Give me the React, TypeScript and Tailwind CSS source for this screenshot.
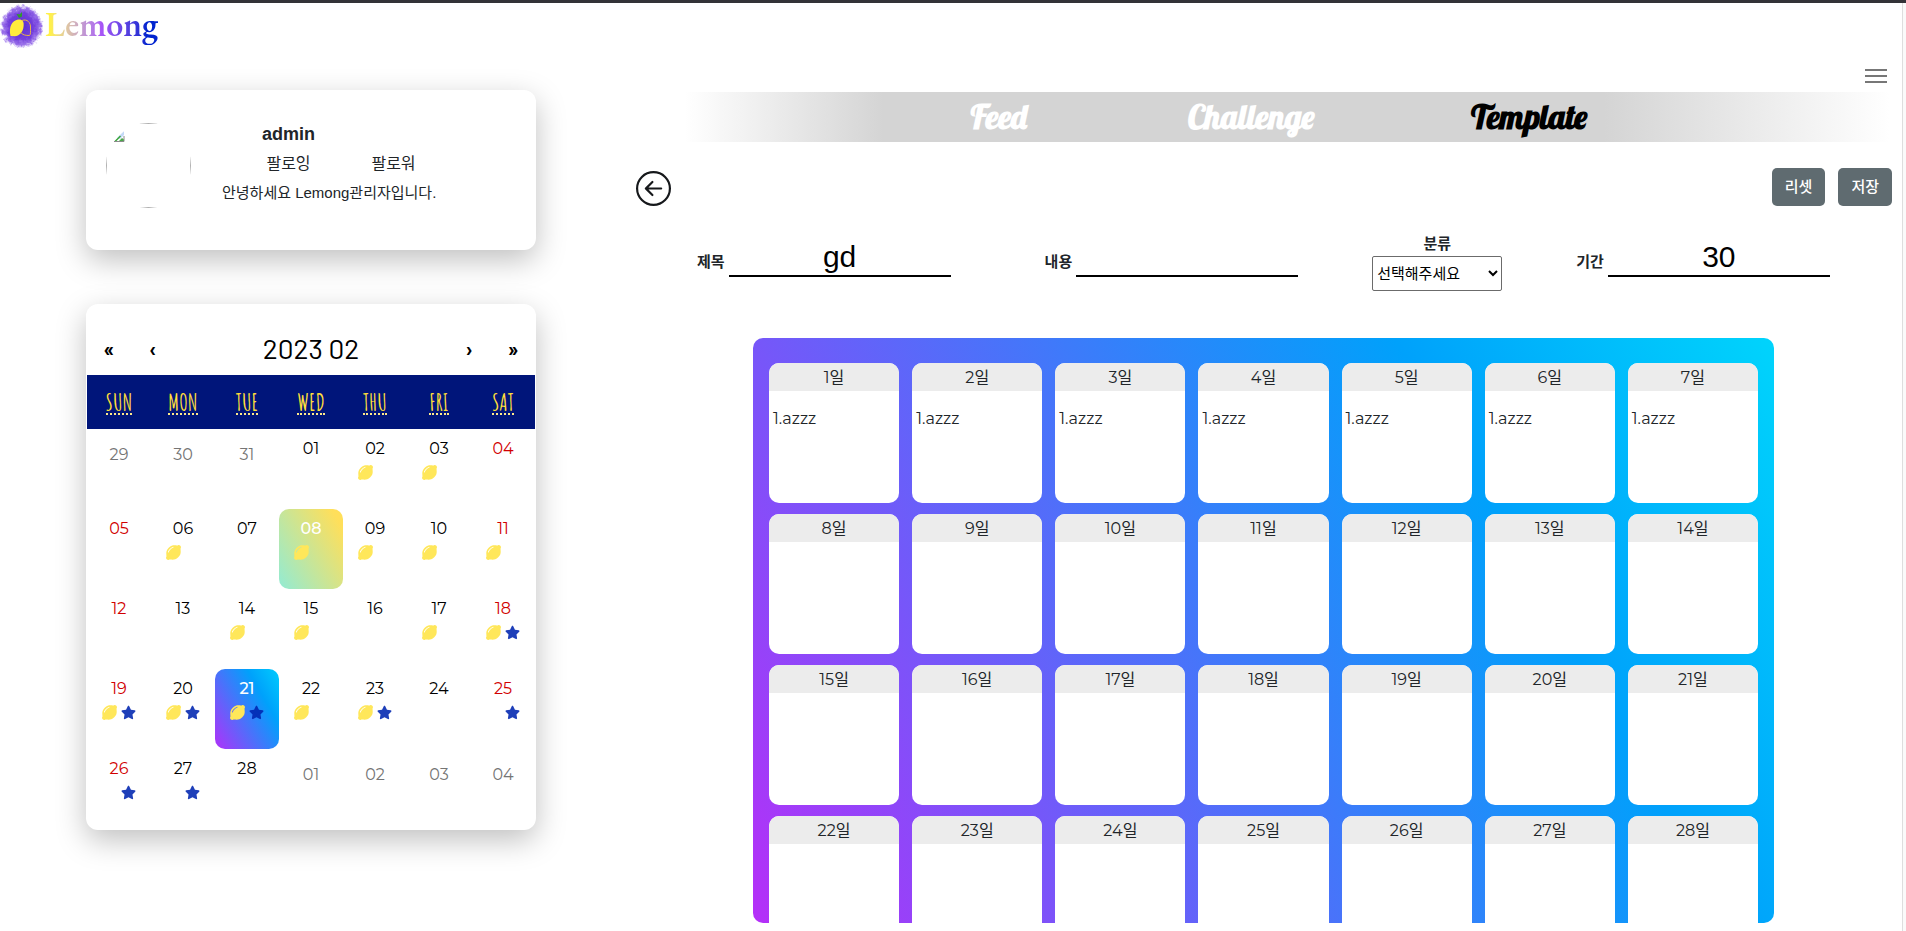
import { useState } from "react";
import { BsArrowLeftCircle } from "react-icons/bs";
import { FaLemon, FaStar } from "react-icons/fa";

type Mark = "" | "L" | "S" | "LS";
type Day = { label: string; marks: Mark; outside?: boolean };

const LEMON_DAYS = [2, 3, 6, 8, 9, 10, 11, 14, 15, 17, 18, 19, 20, 21, 22, 23];
const STAR_DAYS = [18, 19, 20, 21, 23, 25, 26, 27];
const pad = (n: number) => String(n).padStart(2, "0");

const DAYS: Day[] = [
  ...[29, 30, 31].map((n) => ({ label: pad(n), marks: "" as Mark, outside: true })),
  ...Array.from({ length: 28 }, (_, i) => {
    const n = i + 1;
    const marks = ((LEMON_DAYS.includes(n) ? "L" : "") + (STAR_DAYS.includes(n) ? "S" : "")) as Mark;
    return { label: pad(n), marks };
  }),
  ...[1, 2, 3, 4].map((n) => ({ label: pad(n), marks: "" as Mark, outside: true })),
];

const WEEKDAYS = ["SUN", "MON", "TUE", "WED", "THU", "FRI", "SAT"];

function Logo() {
  return (
    <a href="#home" className="flex items-start gap-px">
      <svg width="44" height="46" viewBox="0 0 44 46" aria-hidden="true">
        <defs>
          <radialGradient id="blob">
            <stop offset="0" stopColor="#5a2fd0" />
            <stop offset="0.6" stopColor="#7440dc" />
            <stop offset="0.85" stopColor="#8a5be6" stopOpacity="0.85" />
            <stop offset="1" stopColor="#b79bf0" stopOpacity="0.2" />
          </radialGradient>
          <filter id="rough" x="-10%" y="-10%" width="120%" height="120%">
            <feTurbulence type="fractalNoise" baseFrequency="0.25" numOctaves="2" seed="4" />
            <feDisplacementMap in="SourceGraphic" scale="7" xChannelSelector="R" yChannelSelector="G" />
          </filter>
        </defs>
        <circle cx="21.500" cy="23.500" r="21.500" fill="url(#blob)" filter="url(#rough)" />
        <path d="M10.500 33C8.500 24 12 17.500 18 16.500C22 16 24.500 18 23.500 24C23 29.500 18 34.500 13 33Z" fill="#ffec3d" />
        <path d="M22 17.500C27 15.500 31 19.500 30.500 25C30.300 29 31 31 29.500 32.500C26 32.500 22 32 21 29.500" fill="none" stroke="#e8b24a" strokeWidth="1" />
        <path d="M19 15L16.500 11L19.500 11.500L22 9L22 13.500Z" fill="#2f9a2c" />
      </svg>
      <span className="bg-linear-to-r from-[#fff04a] from-5% via-[#a855f7] via-50% to-[#0023cf] to-90% bg-clip-text font-['EB_Garamond','Cormorant_Garamond','Liberation_Serif',serif] text-[34px] leading-[42px] font-semibold text-transparent">
        Lemong
      </span>
    </a>
  );
}

function Avatar() {
  return (
    <div className="size-[85px] shrink-0 overflow-hidden rounded-full" role="img" aria-label="프로필">
      <div className="size-full border border-[#b0b0b0] pt-[7px] pl-[7px]">
        <svg width="11" height="11" viewBox="0 0 11 11" aria-hidden="true">
          <path d="M3 7L10 0V4L6 8Z" fill="#c3d9f7" />
          <path d="M0 10.500L6 4.500L7 5.500L2 10.500Z" fill="#37a637" />
          <path d="M5 10L8 7L10 8.500V10Z" fill="#4aa84a" />
          <path d="M0 10.500H10V5" fill="none" stroke="#8a8a8a" strokeWidth="1" />
        </svg>
      </div>
    </div>
  );
}

function ProfileCard() {
  return (
    <section className="flex h-40 rounded-xl bg-white pt-[29px] pl-5 shadow-[0_10px_30px_rgba(0,0,0,0.25)]">
      <div className="pt-1">
        <Avatar />
      </div>
      <div className="ml-[31px] leading-[30px]">
        <div className="ml-[14px] grid w-[210px] grid-cols-2 text-center">
          <strong className="text-lg leading-[30px]">admin</strong>
          <span />
          <a href="#following">팔로잉</a>
          <a href="#followers">팔로워</a>
        </div>
        <p className="text-[15px] leading-7">안녕하세요 Lemong관리자입니다.</p>
      </div>
    </section>
  );
}

function DayTile({ day, index }: { day: Day; index: number }) {
  const weekend = index % 7 === 0 || index % 7 === 6;
  let look = "text-black";
  if (day.outside) look = "text-[#757575]";
  else if (day.label === "08") look = "rounded-[10px] bg-[linear-gradient(60deg,#92ebd4,#ffdf5a_90%)] text-white font-medium";
  else if (day.label === "21") look = "rounded-[10px] bg-[linear-gradient(60deg,#b130fa,#00a1fb_71%,#00ccfe)] text-white font-medium";
  else if (weekend) look = "text-[#d10000]";
  return (
    <button type="button" className={`flex h-20 flex-col items-center ${day.outside ? "pt-4" : "pt-[10px]"} ${look}`}>
      <span className="leading-5">{day.label}</span>
      {day.marks !== "" && (
        <span className="mt-[6px] flex w-[34px] justify-between">
          <span className="size-[15px]">{day.marks.includes("L") && <FaLemon size={15} color="#ffe75a" />}</span>
          <span className="size-[15px]">{day.marks.includes("S") && <FaStar size={15} color="#0025b0" opacity={0.88} />}</span>
        </span>
      )}
    </button>
  );
}

function Calendar() {
  const arrow = "h-11 w-11 text-[22px] leading-none text-black font-semibold";
  return (
    <section className="rounded-xl bg-white px-px pt-[22px] shadow-[0_10px_30px_rgba(0,0,0,0.25)]">
      <div className="mb-[5px] flex h-11 items-center font-['Barlow','Roboto',sans-serif]">
        <button type="button" className={arrow}>«</button>
        <button type="button" className={arrow}>‹</button>
        <button type="button" className="flex-1 text-[28px] text-black">2023 02</button>
        <button type="button" className={arrow}>›</button>
        <button type="button" className={arrow}>»</button>
      </div>
      <div className="grid h-[54px] grid-cols-7 items-center justify-items-center bg-[#00157a] pt-0.5 font-['Amatic_SC','Liberation_Sans_Narrow',sans-serif] text-[24px] font-bold text-[#ffdf3a]">
        {WEEKDAYS.map((d) => (
          <abbr key={d} className="border-b-2 border-dotted border-[#ffe98a] leading-[21px] no-underline">{d}</abbr>
        ))}
      </div>
      <div className="grid grid-cols-7 pb-px font-['Montserrat','Lato',sans-serif]">
        {DAYS.map((day, i) => (
          <DayTile key={i} day={day} index={i} />
        ))}
      </div>
    </section>
  );
}

function TextField({ id, label, initial }: { id: string; label: string; initial: string }) {
  const [value, setValue] = useState(initial);
  return (
    <div className="flex gap-1">
      <label htmlFor={id} className="mt-[18px] text-[15px] leading-6 font-bold">{label}</label>
      <input
        id={id}
        value={value}
        onChange={(e) => setValue(e.target.value)}
        className="h-[45px] w-[222px] border-b-2 border-black pt-[5px] text-center text-[30px] text-black outline-none"
      />
    </div>
  );
}

function Board() {
  return (
    <section className="mt-[47px] mr-32 ml-[119px] h-[585px] overflow-hidden rounded-[10px] bg-[linear-gradient(60deg,#b52ff8,#00a1fb_72%,#00d4fc)] px-4 pt-[25px] font-['Montserrat','Lato','Noto_Sans_CJK_KR',sans-serif]">
      <div className="grid grid-cols-7 gap-x-[13px] gap-y-[11px]">
        {Array.from({ length: 28 }, (_, i) => (
          <article key={i} className="h-[140px] overflow-hidden rounded-[10px] bg-white">
            <h3 className="h-7 bg-[#ececec] text-center leading-[30px]">{i + 1}일</h3>
            {i < 7 && <p className="px-1 pt-4 leading-6">1.azzz</p>}
          </article>
        ))}
      </div>
    </section>
  );
}

export default function App() {
  const action = "h-[38px] rounded-[5px] bg-[#5f6b70] px-[13px] text-[15px] font-medium text-white";
  return (
    <div className="flex min-h-screen border-t-[3px] border-[#333338] bg-white font-['Liberation_Sans','Noto_Sans_CJK_KR',sans-serif] text-base text-[#212529]">
      <div className="min-w-0 flex-1">
        <header className="h-[45px]">
          <Logo />
        </header>
        <div className="flex">
          <aside className="ml-[86px] flex w-[450px] shrink-0 flex-col gap-[54px] pt-[42px]">
            <ProfileCard />
            <Calendar />
          </aside>
          <main className="ml-[98px] min-w-0 flex-1">
            <div className="flex h-11 items-end justify-end pr-[15px] pb-[9px]">
              <button type="button" aria-label="메뉴" className="flex w-[22px] flex-col gap-1">
                <span className="h-0.5 w-full bg-[#777]" />
                <span className="h-0.5 w-full bg-[#777]" />
                <span className="h-0.5 w-full bg-[#777]" />
              </button>
            </div>
            <nav className="ml-[26px] flex h-[50px] items-center justify-center gap-[157px] bg-[linear-gradient(to_right,transparent_2%,#d4d4d4_18%,#d4d4d4_76%,transparent_99%)] pr-1 font-['Lobster','Liberation_Serif',serif] text-[33px] font-bold text-white">
              <a href="#feed" className="mr-1">Feed</a>
              <a href="#challenge">Challenge</a>
              <a href="#template" className="text-black">Template</a>
            </nav>
            <div className="mt-[26px] flex items-end pr-[10px] pl-0.5">
              <button type="button" aria-label="뒤로" className="text-[#16181b]">
                <BsArrowLeftCircle size={35} />
              </button>
              <div className="ml-auto flex gap-[13px]">
                <button type="button" className={action}>리셋</button>
                <button type="button" className={action}>저장</button>
              </div>
            </div>
            <form className="mt-[26px] flex items-start gap-[74px] pl-[63px]">
              <div className="mr-5">
                <TextField id="title" label="제목" initial="gd" />
              </div>
              <TextField id="content" label="내용" initial="" />
              <div className="flex w-[130px] flex-col items-center">
                <label htmlFor="kind" className="text-[15px] leading-6 font-bold">분류</label>
                <select id="kind" className="h-[35px] w-full rounded-[2px] border border-[#6b6b6b] bg-white text-[15px] text-black">
                  <option>선택해주세요</option>
                </select>
              </div>
              <TextField id="period" label="기간" initial="30" />
            </form>
            <Board />
          </main>
        </div>
      </div>
      <div className="w-1 border-l border-[#dedede] bg-[#fafafa]" />
    </div>
  );
}
